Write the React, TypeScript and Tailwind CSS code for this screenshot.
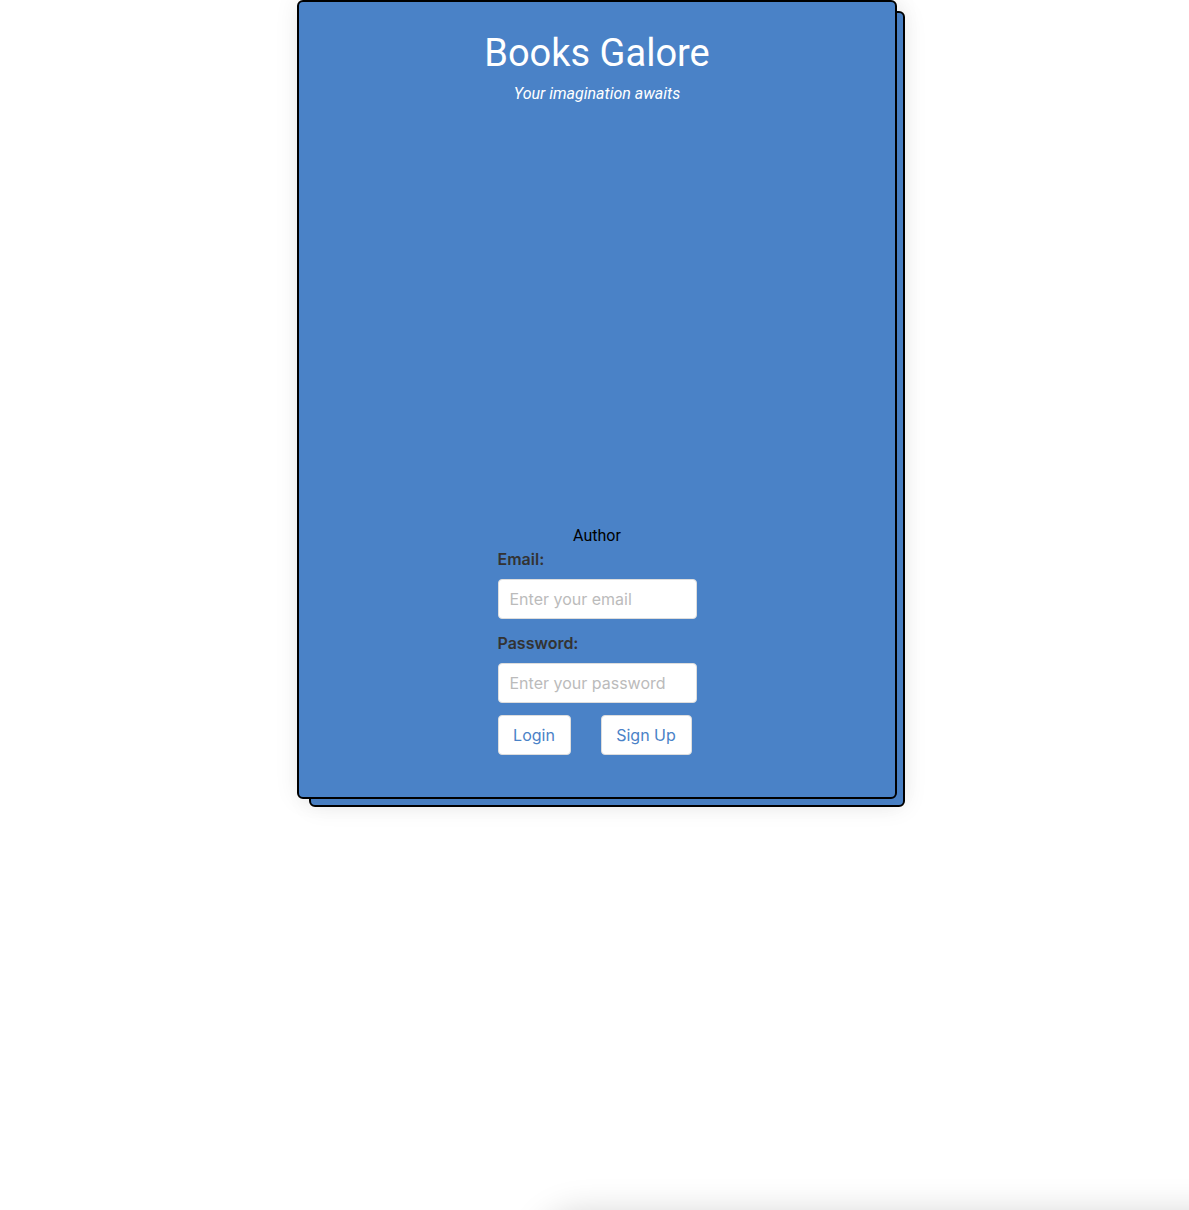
export default function App() {
  return (
    <div className="relative h-[1210px] overflow-hidden bg-white font-['Roboto',sans-serif]">
      <div className="relative ml-[297px] w-[600px]">
        <div className="absolute left-[12px] top-[11px] -right-[8px] -bottom-[8px] rounded-[6px] border-2 border-black bg-[#4a82c7] shadow-[0_0_24px_rgba(0,0,0,0.08)]" />
        <div className="relative flex h-[799px] flex-col items-center rounded-[6px] border-2 border-black bg-[#4a82c7] pt-[27px] shadow-[0_0_24px_rgba(0,0,0,0.08)]">
          <h1 className="text-[38px] leading-[48px] font-normal text-white">Books Galore</h1>
          <p className="mt-[5px] text-[16px] italic leading-[24px] text-white">Your imagination awaits</p>

          <div className="h-[418px]" />

          <p className="text-[16px] leading-[24px] text-black">Author</p>
          <form className="-mt-[1px] flex w-[199px] flex-col font-['Inter',sans-serif]">
            <label className="text-[16px] font-semibold leading-[24px] text-[#333]">Email:</label>
            <input
              type="email"
              placeholder="Enter your email"
              className="mt-[8px] h-[40px] rounded-[4px] border border-[#ddd] bg-white px-[11px] text-[16px] text-[#333] outline-none placeholder:text-[#bbb]"
            />
            <label className="mt-[12px] text-[16px] font-semibold leading-[24px] text-[#333]">Password:</label>
            <input
              type="password"
              placeholder="Enter your password"
              className="mt-[8px] h-[40px] rounded-[4px] border border-[#ddd] bg-white px-[11px] text-[16px] text-[#333] outline-none placeholder:text-[#bbb]"
            />
            <div className="mt-[12px] flex gap-[30px]">
              <button type="button" className="h-[40px] w-[73px] rounded-[4px] border border-[#ddd] bg-white text-[16px] text-[#4a82c7]">
                Login
              </button>
              <button type="button" className="h-[40px] w-[91px] rounded-[4px] border border-[#ddd] bg-white text-[16px] text-[#4a82c7]">
                Sign Up
              </button>
            </div>
          </form>
        </div>
      </div>
      <div className="absolute left-[540px] top-[1214px] h-[200px] w-[800px] rounded-[40px] bg-white shadow-[0_0_36px_rgba(0,0,0,0.18)]" />
    </div>
  );
}
